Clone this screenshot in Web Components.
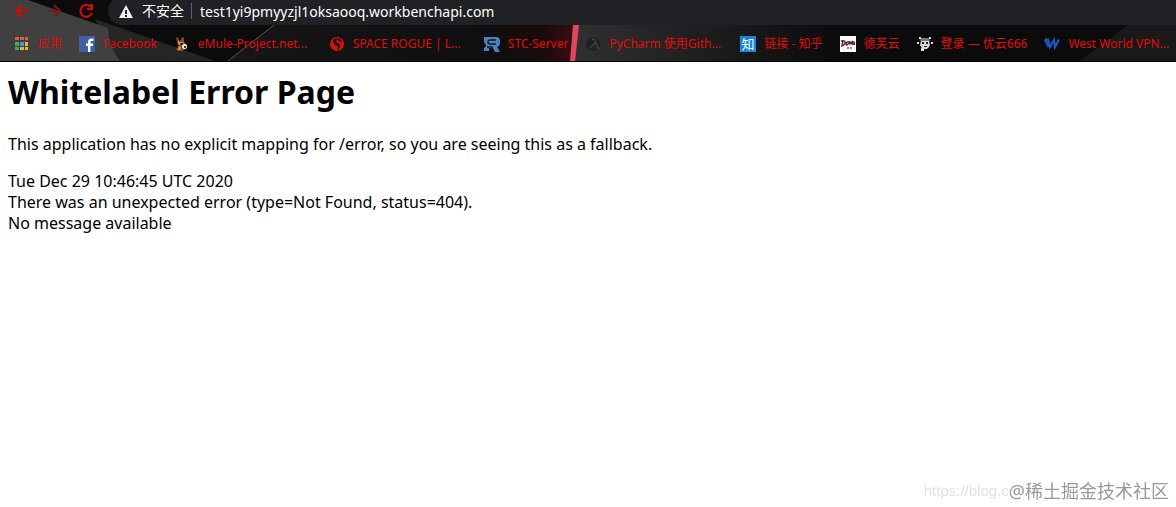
<!DOCTYPE html>
<html lang="en">
<head>
<meta charset="utf-8">
<title>Whitelabel Error Page</title>
<style>
    body {
        margin: 0;
        background: white;
        font-family: "Noto Sans", "Noto Sans CJK SC", sans-serif;
    }
</style>
</head>
<body>
<browser-window>
    <address-bar slot="toolbar" url="test1yi9pmyyzjl1oksaooq.workbenchapi.com"></address-bar>
    <bookmark-bar slot="bookmarks">
        <bookmark-item icon="apps">应用</bookmark-item>
        <bookmark-item icon="facebook">Facebook</bookmark-item>
        <bookmark-item icon="emule" truncated>eMule-Project.net...</bookmark-item>
        <bookmark-item icon="globe" truncated>SPACE ROGUE | L...</bookmark-item>
        <bookmark-item icon="stc">STC-Server</bookmark-item>
        <bookmark-item icon="lambda" truncated>PyCharm 使用Gith...</bookmark-item>
        <bookmark-item icon="zhihu">链接 - 知乎</bookmark-item>
        <bookmark-item icon="dove">德芙云</bookmark-item>
        <bookmark-item icon="cloud">登录 — 优云666</bookmark-item>
        <bookmark-item icon="west" truncated>West World VPN...</bookmark-item>
    </bookmark-bar>
    <error-page>
        <span slot="title">Whitelabel Error Page</span>
        <span slot="summary">This application has no explicit mapping for /error, so you are seeing this as a fallback.</span>
        <span slot="created">Tue Dec 29 10:46:45 UTC 2020</span>
        <span slot="reason">There was an unexpected error (type=Not Found, status=404).</span>
        <span slot="message">No message available</span>
    </error-page>
</browser-window>
<page-watermark>
    <span slot="source">https://blog.c</span>
    <span slot="community">@稀土掘金技术社区</span>
</page-watermark>

<script>
const icons = {
    apps: `
        <path fill="#e0584c" d="M1 1h4v3H1zM6 1h4v3H6zM11 1h3v3h-3z"/>
        <path fill="#3fae58" d="M1 6h4v4H1zM1 11h4v3H1z"/>
        <path fill="#3f96e8" d="M6 6h4v4H6z"/>
        <path fill="#f0b429" d="M11 6h3v4h-3zM6 11h4v3H6zM11 11h3v3h-3z"/>`,
    facebook: `
        <path fill="#4060a5" d="M0 0h16v16H0z"/>
        <path fill="none" stroke="#fff" stroke-width="2.4" d="M10.2 16V6.200q0-2.400 2.600-2.400h1.700M7 8.800h7"/>`,
    emule: `
        <path fill="#8a4a1e" d="M2 2l2-1 1 4 2-1 1-3 2 1v4l3 3-1 4-4 2H4l-2-2 2-4-1-4z"/>
        <path fill="#dd9552" d="M4 3l1 3 4 0 1 2-3 1-3-1zM4 10l3 1-1 3H4z"/>
        <path fill="#1c100a" d="M6 7l3 0v2H7zM3 9l2 1-2 3z"/>
        <circle cx="10.500" cy="10.500" r="2.500" fill="#ece8df"/><path fill="#4a3122" d="M10 10h2v2h-2z"/>`,
    globe: `
        <circle cx="8" cy="8" r="7" fill="#d5110d"/>
        <path fill="#160807" d="M4 4l3-2 2 1-2 2 1 2 3 1v3l-2 3-1-1 1-3-3-1-2-3zM10 2l3 3-2 1-2-2z"/>`,
    stc: `
        <path fill="#4a82c0" d="M0 1h12q4 0 4 4v2q0 3-3 4l3 5h-5l-2-4H5v3H0v-3q2-1 2-3L0 6z"/>
        <path fill="none" stroke="#14161a" stroke-width="1.4" d="M12 4H6Q4 4 4 6t2 2h6M3 11h6"/>`,
    lambda: `
        <circle cx="8" cy="8" r="7" fill="#202020"/>
        <path fill="none" stroke="#444" stroke-width="1.4" d="M7 3q3 0 4 4t3 6M10 7l-5 5"/>`,
    zhihu: `
        <path fill="#1784df" d="M0 0h16v16H0z"/>
        <text x="8" y="13" text-anchor="middle" font-size="13" fill="#fff">知</text>`,
    dove: `
        <path fill="#fafafa" d="M0 0h16v16H0z"/>
        <path fill="none" stroke="#59251f" stroke-width="1.3" d="M3 5L2 9M1 5q5-1 4 2T1 10M8 6q-2 0-2 2t2 0 0-2M10 5v3l3-3M12 8q3-1 2-2t-2 1 3 1"/>
        <path stroke="#97675f" stroke-width="1.5" stroke-dasharray="2 1" d="M7 12h6"/>`,
    cloud: `
        <path fill="#777" d="M4 2h8l1 3H3z"/>
        <path fill="#d7d7d7" d="M4 5h8l1 4q-2 5-6 4-3-1-4-4z"/>
        <path fill="#202020" d="M5 6h2v2H5zM9 6h2v2H9zM7 10h3v1H7z"/>
        <path fill="#ddd" d="M2 1h2v2H2zM12 1h2v2h-2zM0 6h2v2H0zM14 6h2v2h-2zM4 12h3v3H4z"/>`,
    west: `
        <path fill="none" stroke="#1559c4" stroke-width="2.2" d="M1 3.500h3L6 11l4-7 1 7 4-7.500M1 3.500L4.500 11"/>`
};

class BrowserWindow extends HTMLElement {
    constructor() {
        super();
        this.attachShadow({ mode: 'open' });
        this.shadowRoot.innerHTML = `
            <style>
                :host { display: block; }
                header {
                    position: relative;
                    overflow: hidden;
                    background: #0a0a0a;
                    border-bottom: 1px solid black;
                }
                /* wallpaper of the browser theme, painted under both bars */
                .theme {
                    position: absolute;
                    inset: 0;
                    width: 100%;
                    height: 100%;
                }
            </style>
            <header>
                <svg class="theme" viewBox="0 0 1176 61" preserveAspectRatio="none" aria-hidden="true">
                    <defs>
                        <linearGradient id="glow"><stop offset="0" stop-color="#0f0f0f"/><stop offset="0.6" stop-color="#190b0c"/><stop offset="1" stop-color="#3c0c10"/></linearGradient>
                        <linearGradient id="fade"><stop offset="0" stop-color="#303030"/><stop offset="1" stop-color="#0b0b0b"/></linearGradient>
                        <linearGradient id="dusk"><stop offset="0" stop-color="#161616"/><stop offset="1" stop-color="#0f0f0f"/></linearGradient>
                    </defs>
                    <path fill="#0b0b0b" d="M0 0h1176v61H0z"/>
                    <path fill="#252525" d="M95 19L215 61H115z"/>
                    <path fill="#404040" d="M0 0h28l80 28q0 18 12 33H0z"/>
                    <path fill="url(#dusk)" d="M274 25h220v36H228z"/>
                    <path stroke="#625555" d="M274 25L228 61"/>
                    <path fill="url(#glow)" d="M490 25h85l-4 36h-81z"/>
                    <path fill="url(#fade)" d="M578 25h260v36H574z"/>
                    <path fill="#e0475c" d="M573 25h6l-4 36h-5z"/>
                    <path fill="#191919" d="M1128 25h48v36h-96z"/>
                </svg>
                <slot name="toolbar"></slot>
                <slot name="bookmarks"></slot>
            </header>
            <slot></slot>
        `;
    }
}

class AddressBar extends HTMLElement {
    constructor() {
        super();
        this.attachShadow({ mode: 'open' });
    }

    connectedCallback() {
        this.shadowRoot.innerHTML = `
            <style>
                :host {
                    position: relative;
                    display: flex;
                    height: 25px;
                    overflow: hidden;
                }
                nav {
                    display: flex;
                    flex: none;
                    gap: 16px;
                    padding: 3px 14px 0 14px;
                }
                button {
                    width: 16px;
                    height: 16px;
                    padding: 0;
                    border: 0;
                    background: none;
                    color: #dc0808;
                }
                button:disabled { color: #7a1a1a; }
                svg { display: block; fill: none; stroke: currentColor; stroke-width: 2; }
                form {
                    display: flex;
                    flex: 1;
                    align-items: center;
                    gap: 8px;
                    height: 28px;
                    margin-top: -3px;
                    padding-left: 10px;
                    border-radius: 14px 0 0 14px;
                    background: #202124;
                    color: white;
                    font-size: 14px;
                }
                .warning { fill: #f1f1f1; stroke: none; }
                .state {
                    padding-right: 7px;
                    border-right: 1px solid #5f6368;
                    line-height: 16px;
                }
                input {
                    flex: 1;
                    min-width: 0;
                    padding: 0;
                    border: 0;
                    outline: 0;
                    background: none;
                    color: inherit;
                    font: inherit;
                }
            </style>
            <nav>
                <button type="button" aria-label="Back"><svg width="16" height="16"><path d="M15 8H2M8 2L2 8l6 6"/></svg></button>
                <button type="button" aria-label="Forward" disabled><svg width="16" height="16"><path d="M1 8h13M8 2l6 6-6 6"/></svg></button>
                <button type="button" aria-label="Reload"><svg width="16" height="16"><path d="M13 4a6 6 0 1 0 1 6M14 1v5H9"/></svg></button>
            </nav>
            <form>
                <svg class="warning" width="16" height="16" aria-hidden="true"><path fill-rule="evenodd" d="M8 2l7 13H1zM7 7v4h2V7zM7 12v2h2v-2z"/></svg>
                <label class="state" for="url">不安全</label>
                <input id="url" type="text" value="${this.getAttribute('url')}">
            </form>
        `;
    }
}

class BookmarkBar extends HTMLElement {
    constructor() {
        super();
        this.attachShadow({ mode: 'open' });
        this.shadowRoot.innerHTML = `
            <style>
                :host {
                    position: relative;
                    display: flex;
                    align-items: center;
                    gap: 17px;
                    box-sizing: border-box;
                    height: 36px;
                    padding: 1px 0 0 14px;
                    overflow: hidden;
                }
            </style>
            <slot></slot>
        `;
    }
}

class BookmarkItem extends HTMLElement {
    constructor() {
        super();
        this.attachShadow({ mode: 'open' });
    }

    connectedCallback() {
        this.shadowRoot.innerHTML = `
            <style>
                :host { display: block; flex: none; }
                :host([truncated]) { min-width: 138px; }
                a {
                    display: flex;
                    align-items: center;
                    gap: 8px;
                    color: #e30b0b;
                    font-size: 12px;
                    line-height: 16px;
                    text-decoration: none;
                    white-space: nowrap;
                }
            </style>
            <a href="#">
                <svg width="16" height="16" aria-hidden="true">${icons[this.getAttribute('icon')]}</svg>
                <slot></slot>
            </a>
        `;
    }
}

class ErrorPage extends HTMLElement {
    constructor() {
        super();
        this.attachShadow({ mode: 'open' });
        this.shadowRoot.innerHTML = `
            <style>
                :host {
                    display: block;
                    padding: 8px;
                    color: black;
                    font-size: 16px;
                    line-height: 21px;
                }
                h1 {
                    margin: 0 0 21px;
                    font-size: 32px;
                    line-height: 43px;
                }
                p { margin: 0 0 16px; }
            </style>
            <h1><slot name="title"></slot></h1>
            <p><slot name="summary"></slot></p>
            <div><slot name="created"></slot></div>
            <div><slot name="reason"></slot></div>
            <div><slot name="message"></slot></div>
        `;
    }
}

class PageWatermark extends HTMLElement {
    constructor() {
        super();
        this.attachShadow({ mode: 'open' });
        this.shadowRoot.innerHTML = `
            <style>
                :host {
                    position: fixed;
                    right: 7px;
                    bottom: 4px;
                    display: flex;
                    align-items: center;
                    line-height: 24px;
                    white-space: nowrap;
                }
                .source {
                    color: #e2e2e2;
                    font-family: "Liberation Sans", sans-serif;
                    font-size: 15px;
                }
                .community { color: #999; font-size: 18px; }
            </style>
            <span class="source"><slot name="source"></slot></span>
            <span class="community"><slot name="community"></slot></span>
        `;
    }
}

customElements.define("browser-window", BrowserWindow);
customElements.define("address-bar", AddressBar);
customElements.define("bookmark-bar", BookmarkBar);
customElements.define("bookmark-item", BookmarkItem);
customElements.define("error-page", ErrorPage);
customElements.define("page-watermark", PageWatermark);
</script>
</body>
</html>
